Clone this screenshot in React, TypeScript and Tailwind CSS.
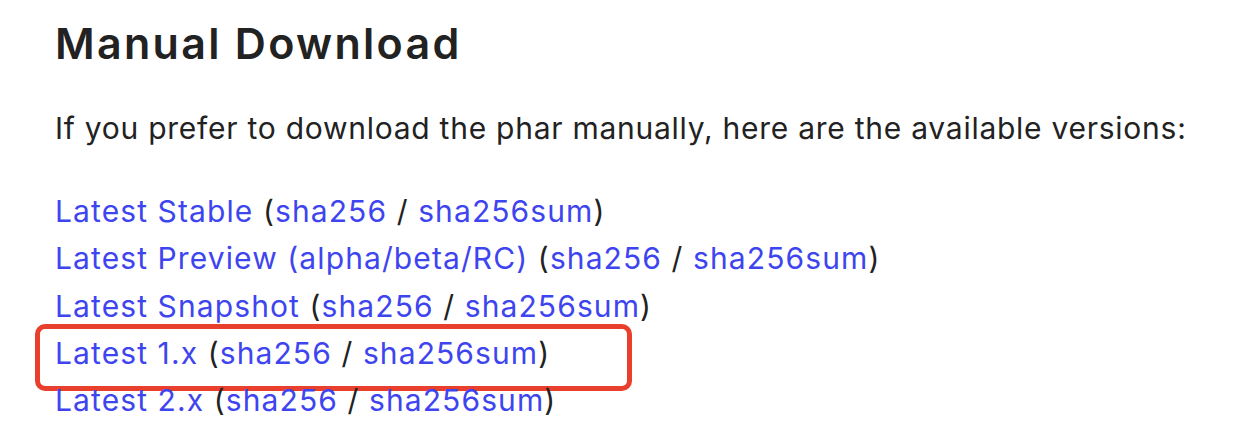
const links = [
  { label: "Latest Stable" },
  { label: "Latest Preview (alpha/beta/RC)" },
  { label: "Latest Snapshot" },
  { label: "Latest 1.x", highlight: true },
  { label: "Latest 2.x" },
];

const DownloadLine = ({ label, highlight }: { label: string; highlight?: boolean }) => {
  return (
    <div className="relative h-[47.3px] leading-[47.3px] whitespace-nowrap">
      {highlight ? (
        <div className="absolute left-[-20px] top-[-6px] h-[67px] w-[597px] rounded-[10px] border-[5px] border-[#e8402d]" />
      ) : null}
      <a className="text-[#3e45ef]">{label}</a> (
      <a className="text-[#3e45ef]">sha256</a> /{" "}
      <a className="text-[#3e45ef]">sha256sum</a>)
    </div>
  );
};

const App = () => {
  return (
    <div
      className="h-[438px] w-[1234px] overflow-hidden bg-white pl-[55px] text-[#222]"
      style={{ fontFamily: 'Inter, "Liberation Sans", Arial, sans-serif' }}
    >
      <h2 className="pt-[15px] text-[43px] leading-[56px] font-semibold tracking-[2.3px]">
        Manual Download
      </h2>
      <p className="mt-[37px] text-[30px] leading-[40px] tracking-[0.74px] whitespace-nowrap">
        If you prefer to download the phar manually, here are the available versions:
      </p>
      <div className="mt-[40px] text-[30px] tracking-[1.1px]">
        {links.map((link) => (
          <DownloadLine key={link.label} label={link.label} highlight={link.highlight} />
        ))}
      </div>
    </div>
  );
};

export default App;
